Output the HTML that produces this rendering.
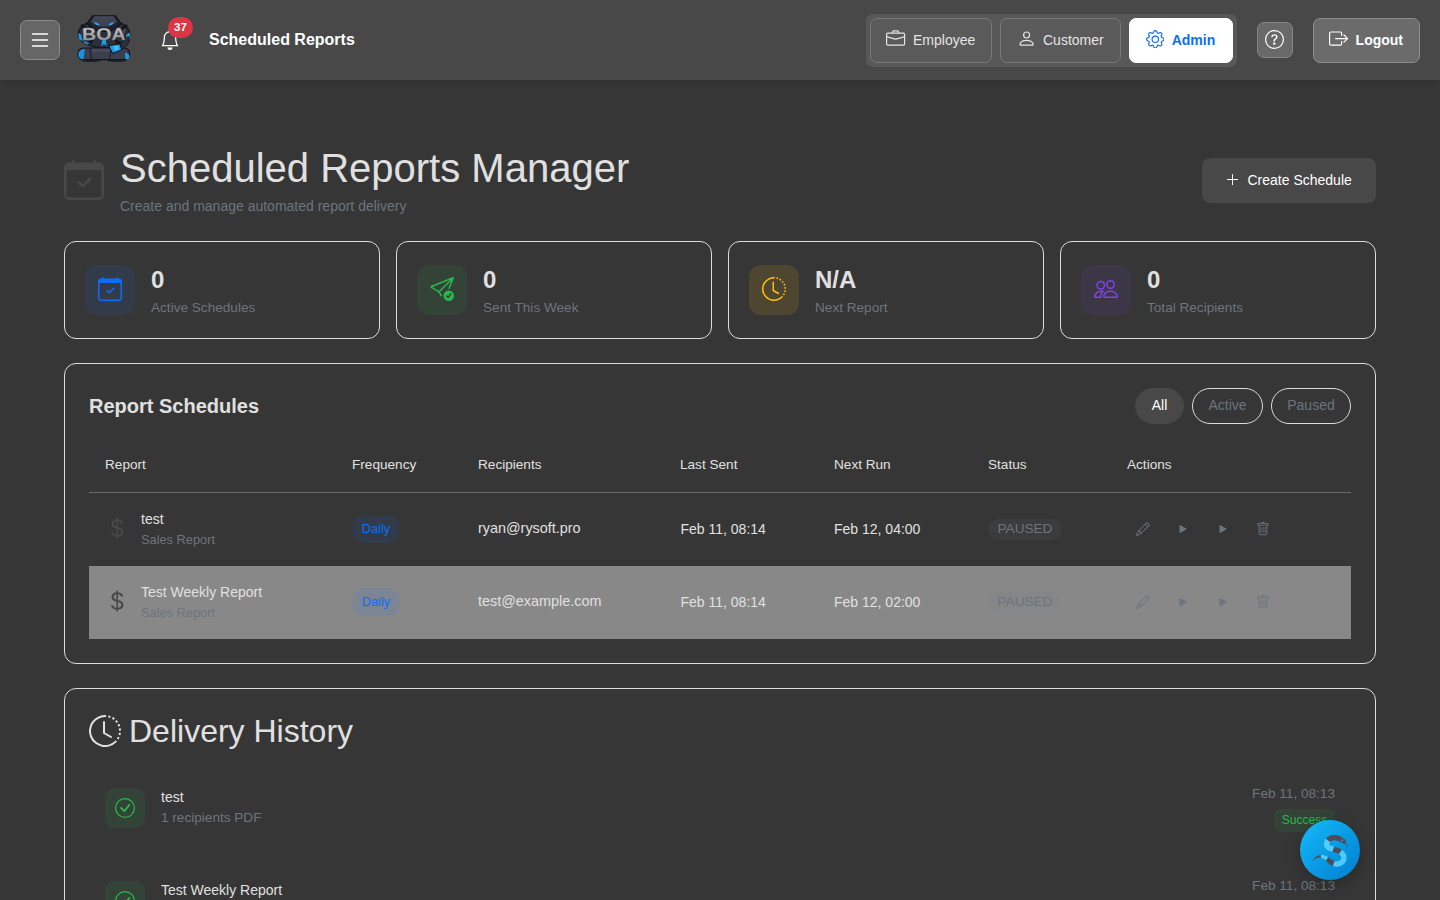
<!DOCTYPE html>
<html lang="en">
<head>
<meta charset="utf-8">
<title>Scheduled Reports</title>
<style>
*{box-sizing:border-box;margin:0;padding:0}
html,body{width:1440px;height:900px;overflow:hidden}
body{background:#363636;color:#e0e0e0;font-family:"Liberation Sans",Arial,sans-serif;font-size:16px;line-height:1.5;position:relative}
svg{display:block}
.ic{position:absolute}
.abs{position:absolute;white-space:nowrap}
.hdr{position:absolute;left:0;top:0;width:1440px;height:80px;background:#484848;box-shadow:0 2px 4px rgba(0,0,0,.12)}
.hbtn{position:absolute;left:20px;top:20px;width:40px;height:40px;background:#666;border:1px solid #8c8c8c;border-radius:7px}
.badge37{position:absolute;left:168px;top:17px;width:25px;height:21px;border-radius:10.5px;background:#dc3545;color:#fff;font-size:11.5px;font-weight:700;text-align:center;line-height:21px}
.ttl{position:absolute;left:209px;top:28px;font-size:16px;font-weight:700;color:#fff;line-height:24px;white-space:nowrap}
.seg{position:absolute;left:866px;top:14px;width:371px;height:52.700px;background:#585858;border-radius:7px}
.nb{position:absolute;top:18px;height:45px;border:1px solid #777;background:#5a5a5a;border-radius:7px;color:#e4e4e4;font-size:14px;line-height:43px;white-space:nowrap}
.nb span{position:absolute;top:0}
.h1{position:absolute;left:120px;top:144px;font-size:40px;line-height:48px;font-weight:400;color:#e0e0e0;white-space:nowrap}
.sub{position:absolute;left:120px;top:196px;font-size:14px;line-height:21px;color:#6c757d;white-space:nowrap}
.create{position:absolute;left:1202px;top:158px;width:174px;height:45px;background:#484848;border-radius:8px;color:#fff;font-size:14px;line-height:45px}
.stat{position:absolute;top:241px;width:316px;height:98px;border:1px solid #dcdcdc;border-radius:12px}
.stat .ib{position:absolute;left:20px;top:23px;width:50px;height:50px;border-radius:12px}
.stat .v{position:absolute;left:86px;top:20px;font-size:24px;font-weight:700;line-height:36px;color:#e0e0e0}
.stat .l{position:absolute;left:86px;top:54.500px;font-size:13.6px;line-height:21px;color:#6c757d;white-space:nowrap}
.card{position:absolute;left:64px;width:1312px;border:1px solid #dcdcdc;border-radius:12px}
.th{position:absolute;top:455px;font-size:13.6px;line-height:20px;color:#e0e0e0;white-space:nowrap}
.pill{position:absolute;top:388px;height:36px;border-radius:18px;font-size:14px;line-height:33px;text-align:center;border:1px solid #dcdcdc;color:#6c757d}
.row{position:absolute;left:89px;width:1262px;height:73px}
.row .c{position:absolute;white-space:nowrap}
.nm{font-size:14px;line-height:20px;color:#e0e0e0}
.ty{font-size:12.8px;line-height:20px;color:#6c757d}
.daily{left:263px;top:22px;width:48px;height:28px;border-radius:12px;background:rgba(13,110,253,.1);color:#0d6efd;font-size:12.8px;line-height:28px;text-align:center}
.em{left:389px;top:25px;font-size:14.4px;line-height:20px;color:#e0e0e0}
.dt{top:26px;font-size:14px;line-height:20px;color:#e0e0e0}
.paused{left:899px;top:26px;width:74px;height:21px;border-radius:10.5px;background:rgba(108,117,125,.1);color:#6c757d;font-size:13.6px;line-height:19.500px;text-align:center}
.hb{position:absolute;left:105px;width:40px;height:40px;border-radius:9px;background:rgba(40,167,69,.12)}
.hd{position:absolute;right:105px;font-size:13.6px;line-height:20px;color:#6c757d;white-space:nowrap}
.succ{position:absolute;left:1274px;width:61px;height:23px;border-radius:6px;background:rgba(40,167,69,.12);color:#28b84c;font-size:12px;line-height:23px;text-align:center}
.fab{position:absolute;left:1300px;top:820px;width:60px;height:60px;border-radius:50%;background:linear-gradient(135deg,#12b4f6 10%,#0284d2 90%);box-shadow:0 4px 14px rgba(0,0,0,.25)}
</style>
</head>
<body>
<div class="hdr">
  <div class="hbtn"><svg class="ic" style="left:7px;top:6.500px;" width="24" height="24" viewBox="0 0 16 16" fill="#fff"><path fill-rule="evenodd" d="M2.5 12a.5.5 0 0 1 .5-.5h10a.5.5 0 0 1 0 1H3a.5.5 0 0 1-.5-.5m0-4a.5.5 0 0 1 .5-.5h10a.5.5 0 0 1 0 1H3a.5.5 0 0 1-.5-.5m0-4a.5.5 0 0 1 .5-.5h10a.5.5 0 0 1 0 1H3a.5.5 0 0 1-.5-.5"/></svg></div>
  <svg class="ic" style="left:76px;top:14px" width="56" height="50" viewBox="0 0 56 50">
<defs><linearGradient id="sv" x1="0" y1="0" x2="0" y2="1"><stop offset="0" stop-color="#d2d2d2"/><stop offset=".55" stop-color="#b0b0b0"/><stop offset="1" stop-color="#8c8c8c"/></linearGradient></defs>
<ellipse cx="15" cy="46.300" rx="10" ry="1.800" fill="#20222b"/><ellipse cx="41" cy="46.300" rx="10" ry="1.800" fill="#20222b"/>
<ellipse cx="28" cy="19.800" rx="26.500" ry="14.800" fill="#181a22"/>
<ellipse cx="28" cy="19.800" rx="24.800" ry="13.300" fill="#2b2e3b"/>
<path d="M5 11 L12 16 M51 11 L44 16 M3 24 L10 24 M53 24 L46 24 M12 30 L17 26 M44 30 L39 26" stroke="#13141b" stroke-width="2.400"/>
<path d="M7 15 L10 21 M49 15 L46 21" stroke="#454959" stroke-width="2.500"/>
<path d="M16.500 1.800 H39.500 L45 9.500 L40 14 L33.500 17.500 H22.500 L16 14 L11 9.500 Z" fill="#1f212b" stroke="#13141b" stroke-width="1.200" stroke-linejoin="round"/>
<path d="M18 2.800 H38 L41.500 8 L33 12.500 H23 L14.500 8 Z" fill="#3f4354"/>
<path d="M18.500 2.900 H37.500" stroke="#5b6072" stroke-width=".8"/>
<path d="M17.500 8 L21.500 9 L24 11.600 L20 10.800 Z" fill="#1fb1f6"/><path d="M38.500 8 L34.500 9 L32 11.600 L36 10.800 Z" fill="#1fb1f6"/>
<path d="M26.300 25 L25.200 32.500 L27.300 30 L28 31.500 L28.700 30 L30.800 32.500 L29.700 25 Z" fill="#1a9aec"/>
<path d="M2.200 19 L3 25 L7 27.500 L5 20.500 Z" fill="#1a9aec"/><path d="M50.500 21 L53.800 18.500 L53.300 24.500 L49.500 27 Z" fill="#27b3f5"/>
<path d="M8 27 L14 29.500 L11 30.500 L7.500 28.500 Z" fill="#1a8fe0"/>
<rect x="1.200" y="33.500" width="53.200" height="12.800" rx="6.400" fill="#13141b"/>
<rect x="2.500" y="34.500" width="50.600" height="10.500" rx="5.200" fill="#3a3e4d"/>
<rect x="16" y="34.800" width="18" height="3" fill="#474b5b"/>
<path d="M14 34.500 L15.500 45 M35 34.500 L33.500 45" stroke="#1b1d26" stroke-width="1"/>
<path d="M2.300 40.500 Q2.300 35.500 8.800 35 L7.500 45.300 Q2.300 45 2.300 40.500 Z" fill="#1a8fe6"/>
<path d="M49 38.500 L52.500 40 Q54.500 43.500 51.500 45.500 L49.500 45 Z" fill="#1a9aec"/>
<path d="M44 28.500 Q50 27 52 22 L53.500 27 Q51.500 32.500 46 35 Z" fill="#2b2e3b" stroke="#13141b" stroke-width=".8"/>
<path d="M32.200 31.200 L44.200 29.400 L46.300 36 L36.200 40 Z" fill="#13141b"/>
<path d="M33.300 31.900 L43.500 30.400 L45.200 35.500 L36.800 38.800 Z" fill="#1a9aec"/><path d="M37 32.200 L41.800 31.500 L43.300 35.300 L39 37 Z" fill="#3abdf8"/>
<text x="27.800" y="25.800" text-anchor="middle" font-family="'Liberation Sans',Arial,sans-serif" font-weight="700" font-size="16.200" textLength="43.500" lengthAdjust="spacingAndGlyphs" fill="url(#sv)" stroke="#777" stroke-width=".3">BOA</text>
</svg>

  <svg class="ic" style="left:160px;top:30px;" width="20" height="20" viewBox="0 0 16 16" fill="#fff"><path d="M8 16a2 2 0 0 0 2-2H6a2 2 0 0 0 2 2M8 1.918l-.797.161A4 4 0 0 0 4 6c0 .628-.134 2.197-.459 3.742-.16.767-.376 1.566-.663 2.258h10.244c-.287-.692-.502-1.49-.663-2.258C12.134 8.197 12 6.628 12 6a4 4 0 0 0-3.203-3.92zM14.22 12c.223.447.481.801.78 1H1c.299-.199.557-.553.78-1C2.68 10.2 3 6.88 3 6c0-2.42 1.72-4.44 4.005-4.901a1 1 0 1 1 1.99 0A5 5 0 0 1 13 6c0 .88.32 4.2 1.22 6"/></svg>
  <div class="badge37">37</div>
  <div class="ttl">Scheduled Reports</div>
  <div class="seg"></div>
  <div class="nb" style="left:870px;width:122px"><svg class="ic" style="left:15.400px;top:10.400px;" width="19.200" height="19.200" viewBox="0 0 16 16" fill="#e4e4e4"><path d="M6.5 1A1.5 1.5 0 0 0 5 2.5V3H1.5A1.5 1.5 0 0 0 0 4.5v8A1.5 1.5 0 0 0 1.5 14h13a1.5 1.5 0 0 0 1.5-1.5v-8A1.5 1.5 0 0 0 14.5 3H11v-.5A1.5 1.5 0 0 0 9.5 1zm0 1h3a.5.5 0 0 1 .5.5V3H6v-.5a.5.5 0 0 1 .5-.5m1.886 6.914L15 7.151V12.5a.5.5 0 0 1-.5.5h-13a.5.5 0 0 1-.5-.5V7.15l6.614 1.764a1.5 1.5 0 0 0 .772 0M1.5 4h13a.5.5 0 0 1 .5.5v1.616L8.129 7.948a.5.5 0 0 1-.258 0L1 6.116V4.5a.5.5 0 0 1 .5-.5"/></svg><span style="left:42px">Employee</span></div>
  <div class="nb" style="left:1000px;width:121px"><svg class="ic" style="left:15.700px;top:10.400px;" width="19.200" height="19.200" viewBox="0 0 16 16" fill="#e4e4e4"><path d="M8 8a3 3 0 1 0 0-6 3 3 0 0 0 0 6m2-3a2 2 0 1 1-4 0 2 2 0 0 1 4 0m4 8c0 1-1 1-1 1H3s-1 0-1-1 1-4 6-4 6 3 6 4m-1-.004c-.001-.246-.154-.986-.832-1.664C11.516 10.68 10.289 10 8 10s-3.516.68-4.168 1.332c-.678.678-.83 1.418-.832 1.664z"/></svg><span style="left:42px">Customer</span></div>
  <div class="nb" style="left:1129px;width:104px;background:#fff;border-color:#fff;color:#0d6efd;font-weight:700"><svg class="ic" style="left:15.600px;top:10.650px;" width="18.600" height="18.600" viewBox="0 0 16 16" fill="#0d6efd"><path d="M8 4.754a3.246 3.246 0 1 0 0 6.492 3.246 3.246 0 0 0 0-6.492M5.754 8a2.246 2.246 0 1 1 4.492 0 2.246 2.246 0 0 1-4.492 0"/><path d="M9.796 1.343c-.527-1.79-3.065-1.79-3.592 0l-.094.319a.873.873 0 0 1-1.255.52l-.292-.16c-1.64-.892-3.433.902-2.54 2.541l.159.292a.873.873 0 0 1-.52 1.255l-.319.094c-1.79.527-1.79 3.065 0 3.592l.319.094a.873.873 0 0 1 .52 1.255l-.16.292c-.892 1.64.901 3.434 2.541 2.54l.292-.159a.873.873 0 0 1 1.255.52l.094.319c.527 1.79 3.065 1.79 3.592 0l.094-.319a.873.873 0 0 1 1.255-.52l.292.16c1.64.893 3.434-.902 2.54-2.541l-.159-.292a.873.873 0 0 1 .52-1.255l.319-.094c1.79-.527 1.79-3.065 0-3.592l-.319-.094a.873.873 0 0 1-.52-1.255l.16-.292c.893-1.64-.902-3.433-2.541-2.54l-.292.159a.873.873 0 0 1-1.255-.52zm-2.633.283c.246-.835 1.428-.835 1.674 0l.094.319a1.873 1.873 0 0 0 2.693 1.115l.291-.16c.764-.415 1.6.42 1.184 1.185l-.159.292a1.873 1.873 0 0 0 1.116 2.692l.318.094c.835.246.835 1.428 0 1.674l-.319.094a1.873 1.873 0 0 0-1.115 2.693l.16.291c.415.764-.42 1.6-1.185 1.184l-.291-.159a1.873 1.873 0 0 0-2.693 1.116l-.094.318c-.246.835-1.428.835-1.674 0l-.094-.319a1.873 1.873 0 0 0-2.692-1.115l-.292.16c-.764.415-1.6-.42-1.184-1.185l.159-.291A1.873 1.873 0 0 0 1.945 8.93l-.319-.094c-.835-.246-.835-1.428 0-1.674l.319-.094A1.873 1.873 0 0 0 3.06 4.377l-.16-.292c-.415-.764.42-1.6 1.185-1.184l.292.159a1.873 1.873 0 0 0 2.692-1.115z"/></svg><span style="left:41.700px">Admin</span></div>
  <div class="nb" style="left:1257px;top:22px;width:36px;height:36px;background:#696969;border-color:#868686"><svg class="ic" style="left:7px;top:6.700px;" width="19" height="19" viewBox="0 0 16 16" fill="#fff"><path d="M8 15A7 7 0 1 1 8 1a7 7 0 0 1 0 14m0 1A8 8 0 1 0 8 0a8 8 0 0 0 0 16"/><path d="M5.255 5.786a.237.237 0 0 0 .241.247h.825c.138 0 .248-.113.266-.25.09-.656.54-1.134 1.342-1.134.686 0 1.314.343 1.314 1.168 0 .635-.374.927-.965 1.371-.673.489-1.206 1.06-1.168 1.987l.003.217a.25.25 0 0 0 .25.246h.811a.25.25 0 0 0 .25-.25v-.105c0-.718.273-.927 1.01-1.486.609-.463 1.244-.977 1.244-2.056 0-1.511-1.276-2.241-2.673-2.241-1.267 0-2.655.59-2.75 2.286m1.557 5.763c0 .533.425.927 1.01.927.609 0 1.028-.394 1.028-.927 0-.552-.42-.94-1.029-.94-.584 0-1.009.388-1.009.94"/></svg></div>
  <div class="nb" style="left:1313px;width:107px;color:#fff;font-weight:700;background:#6b6b6b;border-color:#8c8c8c"><svg class="ic" style="left:14.700px;top:10.300px;" width="19.200" height="19.200" viewBox="0 0 16 16" fill="#fff"><path fill-rule="evenodd" d="M10 12.5a.5.5 0 0 1-.5.5h-8a.5.5 0 0 1-.5-.5v-9a.5.5 0 0 1 .5-.5h8a.5.5 0 0 1 .5.5v2a.5.5 0 0 0 1 0v-2A1.5 1.5 0 0 0 9.500 2h-8A1.500 1.500 0 0 0 0 3.500v9A1.500 1.500 0 0 0 1.500 14h8a1.500 1.500 0 0 0 1.500-1.500v-2a.5.5 0 0 0-1 0z"/><path fill-rule="evenodd" d="M15.854 8.354a.5.5 0 0 0 0-.708l-3-3a.5.5 0 0 0-.708.708L14.293 7.500H5.500a.5.5 0 0 0 0 1h8.793l-2.147 2.146a.5.5 0 0 0 .708.708z"/></svg><span style="left:41.600px">Logout</span></div>
</div>

<svg class="ic" style="left:64px;top:160px;" width="40" height="40" viewBox="0 0 16 16" fill="#484848"><path d="M10.854 7.146a.5.5 0 0 1 0 .708l-3 3a.5.5 0 0 1-.708 0l-1.500-1.500a.5.5 0 1 1 .708-.708L7.500 9.793l2.646-2.647a.5.5 0 0 1 .708 0"/><path d="M3.500 0a.5.5 0 0 1 .5.5V1h8V.5a.5.5 0 0 1 1 0V1h1a2 2 0 0 1 2 2v11a2 2 0 0 1-2 2H2a2 2 0 0 1-2-2V3a2 2 0 0 1 2-2h1V.5a.5.5 0 0 1 .5-.5M1 4v10a1 1 0 0 0 1 1h12a1 1 0 0 0 1-1V4z"/></svg>
<div class="h1">Scheduled Reports Manager</div>
<div class="sub">Create and manage automated report delivery</div>
<div class="create"><svg class="ic" style="left:23.300px;top:14.400px;" width="15" height="15" viewBox="0 0 16 16" fill="#fff"><path fill-rule="evenodd" d="M8 2a.5.5 0 0 1 .5.5v5h5a.5.5 0 0 1 0 1h-5v5a.5.5 0 0 1-1 0v-5h-5a.5.5 0 0 1 0-1h5v-5A.5.5 0 0 1 8 2"/></svg><span class="abs" style="left:45.500px;top:0">Create Schedule</span></div>

<div class="stat" style="left:64px"><div class="ib" style="background:rgba(13,110,253,.1)"><svg class="ic" style="left:13px;top:12px;" width="24" height="24" viewBox="0 0 16 16" fill="#0d6efd"><path d="M10.854 7.146a.5.5 0 0 1 0 .708l-3 3a.5.5 0 0 1-.708 0l-1.500-1.500a.5.5 0 1 1 .708-.708L7.500 9.793l2.646-2.647a.5.5 0 0 1 .708 0"/><path d="M3.500 0a.5.5 0 0 1 .5.5V1h8V.5a.5.5 0 0 1 1 0V1h1a2 2 0 0 1 2 2v11a2 2 0 0 1-2 2H2a2 2 0 0 1-2-2V3a2 2 0 0 1 2-2h1V.5a.5.5 0 0 1 .5-.5M1 4v10a1 1 0 0 0 1 1h12a1 1 0 0 0 1-1V4z"/></svg></div><div class="v">0</div><div class="l">Active Schedules</div></div>
<div class="stat" style="left:396px"><div class="ib" style="background:rgba(40,167,69,.12)"><svg class="ic" style="left:13px;top:12px;" width="24" height="24" viewBox="0 0 16 16" fill="#28b84c"><path d="M15.964.686a.5.5 0 0 0-.65-.65L.767 5.855a.75.75 0 0 0-.124 1.329l4.995 3.178 1.531 2.406a.5.5 0 0 0 .844-.536L6.637 10.07l7.494-7.494-1.895 4.738a.5.5 0 1 0 .928.372zm-2.54 1.183L5.930 9.363 1.591 6.602z"/><path d="M16 12.500a3.500 3.500 0 1 1-7 0 3.500 3.500 0 0 1 7 0m-1.993-1.679a.5.5 0 0 0-.686.172l-1.170 1.950-.547-.547a.5.5 0 0 0-.708.708l.774.773a.75.75 0 0 0 1.174-.144l1.335-2.226a.5.5 0 0 0-.172-.686"/></svg></div><div class="v">0</div><div class="l">Sent This Week</div></div>
<div class="stat" style="left:728px"><div class="ib" style="background:rgba(255,193,7,.12)"><svg class="ic" style="left:13px;top:12px;" width="24" height="24" viewBox="0 0 16 16" fill="#ffc107"><path d="M8.515 1.019A7 7 0 0 0 8 1V0a8 8 0 0 1 .589.022zm2.004.45a7 7 0 0 0-.985-.299l.219-.976q.576.129 1.126.342zm1.370.71a7 7 0 0 0-.439-.27l.493-.87a8 8 0 0 1 .979.654l-.615.789a7 7 0 0 0-.418-.302zm1.834 1.790a7 7 0 0 0-.653-.796l.724-.69q.406.429.747.91zm.744 1.352a7 7 0 0 0-.214-.468l.893-.45a8 8 0 0 1 .45 1.088l-.95.313a7 7 0 0 0-.179-.483m.53 2.507a7 7 0 0 0-.1-1.025l.985-.17q.1.58.116 1.17zm-.131 1.538q.05-.254.081-.51l.993.123a8 8 0 0 1-.23 1.155l-.964-.267q.069-.247.12-.501m-.952 2.379q.276-.436.486-.908l.914.405q-.24.54-.555 1.038zm-.964 1.205q.183-.183.35-.378l.758.653a8 8 0 0 1-.401.432z"/><path d="M8 1a7 7 0 1 0 4.950 11.950l.707.707A8.001 8.001 0 1 1 8 0z"/><path d="M7.500 3a.5.5 0 0 1 .5.5v5.210l3.248 1.856a.5.5 0 0 1-.496.868l-3.500-2A.5.5 0 0 1 7 9V3.500a.5.5 0 0 1 .5-.5"/></svg></div><div class="v">N/A</div><div class="l">Next Report</div></div>
<div class="stat" style="left:1060px"><div class="ib" style="background:rgba(111,66,193,.12)"><svg class="ic" style="left:13px;top:12px;" width="24" height="24" viewBox="0 0 16 16" fill="#7f42ec"><path d="M15 14s1 0 1-1-1-4-5-4-5 3-5 4 1 1 1 1zm-7.978-1L7 12.996c.001-.264.167-1.03.76-1.72C8.312 10.629 9.282 10 11 10c1.717 0 2.687.63 3.24 1.276.593.69.758 1.457.76 1.720l-.8.002-.14.002zM11 7a2 2 0 1 0 0-4 2 2 0 0 0 0 4m3-2a3 3 0 1 1-6 0 3 3 0 0 1 6 0M6.936 9.28a6 6 0 0 0-1.23-.247A7 7 0 0 0 5 9c-4 0-5 3-5 4q0 1 1 1h4.216A2.240 2.240 0 0 1 5 13c0-1.010.377-2.042 1.090-2.904.243-.294.526-.569.846-.816M4.920 10A5.500 5.500 0 0 0 4 13H1c0-.26.164-1.030.76-1.724.545-.636 1.492-1.256 3.160-1.275ZM1.500 5.500a3 3 0 1 1 6 0 3 3 0 0 1-6 0m3-2a2 2 0 1 0 0 4 2 2 0 0 0 0-4"/></svg></div><div class="v">0</div><div class="l">Total Recipients</div></div>

<div class="card" style="top:363px;height:301px"></div>
<div class="abs" style="left:89px;top:391px;font-size:20px;font-weight:700;line-height:30px;color:#e0e0e0">Report Schedules</div>
<div class="pill" style="left:1135px;width:49px;background:#484848;border-color:#484848;color:#fff">All</div>
<div class="pill" style="left:1192px;width:71px">Active</div>
<div class="pill" style="left:1271px;width:80px">Paused</div>

<div class="th" style="left:105px">Report</div>
<div class="th" style="left:352px">Frequency</div>
<div class="th" style="left:478px">Recipients</div>
<div class="th" style="left:680px">Last Sent</div>
<div class="th" style="left:834px">Next Run</div>
<div class="th" style="left:988px">Status</div>
<div class="th" style="left:1127px">Actions</div>
<div class="abs" style="left:89px;top:492px;width:1262px;height:1px;background:#6a6a6a"></div>

<div class="row" style="top:493px">
  <svg class="ic" style="left:16px;top:23px;" width="24" height="24" viewBox="0 0 16 16" fill="#484848"><path d="M4 10.781c.148 1.667 1.513 2.850 3.591 3.003V15h1.043v-1.216c2.270-.179 3.678-1.438 3.678-3.300 0-1.590-.947-2.510-2.956-3.028l-.722-.187V3.467c1.122.110 1.879.714 2.070 1.616h1.470c-.166-1.600-1.540-2.766-3.540-2.893V1H7.591v1.233c-1.939.230-3.270 1.472-3.270 3.156 0 1.454.966 2.483 2.661 2.917l.610.162v4.031c-1.149-.170-1.940-.800-2.131-1.718zm3.391-3.836c-1.043-.263-1.600-.825-1.600-1.616 0-.944.704-1.641 1.800-1.828v3.495l-.2-.050zm1.591 1.872c1.287.323 1.852.859 1.852 1.769 0 1.097-.826 1.828-2.200 1.939V8.730z"/></svg>
  <div class="c nm" style="left:52px;top:16px">test</div>
  <div class="c ty" style="left:52px;top:37px">Sales Report</div>
  <div class="c daily">Daily</div>
  <div class="c em">ryan@rysoft.pro</div>
  <div class="c dt" style="left:591.500px">Feb 11, 08:14</div>
  <div class="c dt" style="left:745px">Feb 12, 04:00</div>
  <div class="c paused">PAUSED</div>
  <svg class="ic" style="left:1046.500px;top:29px;" width="14" height="14" viewBox="0 0 16 16" fill="#6c757d"><path d="M12.146.146a.5.5 0 0 1 .708 0l3 3a.5.5 0 0 1 0 .708l-10 10a.5.5 0 0 1-.168.110l-5 2a.5.5 0 0 1-.650-.650l2-5a.5.5 0 0 1 .110-.168zM11.207 2.500 13.500 4.793 14.793 3.500 12.500 1.207zm1.586 3L10.500 3.207 4 9.707V10h.5a.5.5 0 0 1 .5.5v.5h.5a.5.5 0 0 1 .5.5v.5h.293zm-9.761 5.175-.106.106-1.528 3.821 3.821-1.528.106-.106A.5.5 0 0 1 5 12.500V12h-.5a.5.5 0 0 1-.5-.5V11h-.5a.5.5 0 0 1-.468-.325"/></svg><svg class="ic" style="left:1086.500px;top:29px;" width="14" height="14" viewBox="0 0 16 16" fill="#6c757d"><path d="m11.596 8.697-6.363 3.692c-.54.313-1.233-.066-1.233-.697V4.308c0-.63.692-1.010 1.233-.696l6.363 3.692a.802.802 0 0 1 0 1.393"/></svg><svg class="ic" style="left:1126.500px;top:29px;" width="14" height="14" viewBox="0 0 16 16" fill="#6c757d"><path d="m11.596 8.697-6.363 3.692c-.54.313-1.233-.066-1.233-.697V4.308c0-.63.692-1.010 1.233-.696l6.363 3.692a.802.802 0 0 1 0 1.393"/></svg><svg class="ic" style="left:1166.500px;top:29px;" width="14" height="14" viewBox="0 0 16 16" fill="#6c757d"><path d="M5.500 5.500A.5.5 0 0 1 6 6v6a.5.5 0 0 1-1 0V6a.5.5 0 0 1 .5-.5m2.500 0a.5.5 0 0 1 .5.5v6a.5.5 0 0 1-1 0V6a.5.5 0 0 1 .5-.5m3 .5a.5.5 0 0 0-1 0v6a.5.5 0 0 0 1 0z"/><path d="M14.500 3a1 1 0 0 1-1 1H13v9a2 2 0 0 1-2 2H5a2 2 0 0 1-2-2V4h-.5a1 1 0 0 1-1-1V2a1 1 0 0 1 1-1H6a1 1 0 0 1 1-1h2a1 1 0 0 1 1 1h3.500a1 1 0 0 1 1 1zM4.118 4 4 4.059V13a1 1 0 0 0 1 1h6a1 1 0 0 0 1-1V4.059L11.882 4zM2.500 3h11V2h-11z"/></svg>
</div>
<div class="abs" style="left:89px;top:565.600px;width:1262px;height:73.100px;background:#888"></div>
<div class="row" style="top:566px">
  <svg class="ic" style="left:16px;top:23px;" width="24" height="24" viewBox="0 0 16 16" fill="#484848"><path d="M4 10.781c.148 1.667 1.513 2.850 3.591 3.003V15h1.043v-1.216c2.270-.179 3.678-1.438 3.678-3.300 0-1.590-.947-2.510-2.956-3.028l-.722-.187V3.467c1.122.110 1.879.714 2.070 1.616h1.470c-.166-1.600-1.540-2.766-3.540-2.893V1H7.591v1.233c-1.939.230-3.270 1.472-3.270 3.156 0 1.454.966 2.483 2.661 2.917l.610.162v4.031c-1.149-.170-1.940-.800-2.131-1.718zm3.391-3.836c-1.043-.263-1.600-.825-1.600-1.616 0-.944.704-1.641 1.800-1.828v3.495l-.2-.050zm1.591 1.872c1.287.323 1.852.859 1.852 1.769 0 1.097-.826 1.828-2.200 1.939V8.730z"/></svg>
  <div class="c nm" style="left:52px;top:16px">Test Weekly Report</div>
  <div class="c ty" style="left:52px;top:37px">Sales Report</div>
  <div class="c daily">Daily</div>
  <div class="c em">test@example.com</div>
  <div class="c dt" style="left:591.500px">Feb 11, 08:14</div>
  <div class="c dt" style="left:745px">Feb 12, 02:00</div>
  <div class="c paused">PAUSED</div>
  <svg class="ic" style="left:1046.500px;top:29px;" width="14" height="14" viewBox="0 0 16 16" fill="#6c757d"><path d="M12.146.146a.5.5 0 0 1 .708 0l3 3a.5.5 0 0 1 0 .708l-10 10a.5.5 0 0 1-.168.110l-5 2a.5.5 0 0 1-.650-.650l2-5a.5.5 0 0 1 .110-.168zM11.207 2.500 13.500 4.793 14.793 3.500 12.500 1.207zm1.586 3L10.500 3.207 4 9.707V10h.5a.5.5 0 0 1 .5.5v.5h.5a.5.5 0 0 1 .5.5v.5h.293zm-9.761 5.175-.106.106-1.528 3.821 3.821-1.528.106-.106A.5.5 0 0 1 5 12.500V12h-.5a.5.5 0 0 1-.5-.5V11h-.5a.5.5 0 0 1-.468-.325"/></svg><svg class="ic" style="left:1086.500px;top:29px;" width="14" height="14" viewBox="0 0 16 16" fill="#6c757d"><path d="m11.596 8.697-6.363 3.692c-.54.313-1.233-.066-1.233-.697V4.308c0-.63.692-1.010 1.233-.696l6.363 3.692a.802.802 0 0 1 0 1.393"/></svg><svg class="ic" style="left:1126.500px;top:29px;" width="14" height="14" viewBox="0 0 16 16" fill="#6c757d"><path d="m11.596 8.697-6.363 3.692c-.54.313-1.233-.066-1.233-.697V4.308c0-.63.692-1.010 1.233-.696l6.363 3.692a.802.802 0 0 1 0 1.393"/></svg><svg class="ic" style="left:1166.500px;top:29px;" width="14" height="14" viewBox="0 0 16 16" fill="#6c757d"><path d="M5.500 5.500A.5.5 0 0 1 6 6v6a.5.5 0 0 1-1 0V6a.5.5 0 0 1 .5-.5m2.500 0a.5.5 0 0 1 .5.5v6a.5.5 0 0 1-1 0V6a.5.5 0 0 1 .5-.5m3 .5a.5.5 0 0 0-1 0v6a.5.5 0 0 0 1 0z"/><path d="M14.500 3a1 1 0 0 1-1 1H13v9a2 2 0 0 1-2 2H5a2 2 0 0 1-2-2V4h-.5a1 1 0 0 1-1-1V2a1 1 0 0 1 1-1H6a1 1 0 0 1 1-1h2a1 1 0 0 1 1 1h3.500a1 1 0 0 1 1 1zM4.118 4 4 4.059V13a1 1 0 0 0 1 1h6a1 1 0 0 0 1-1V4.059L11.882 4zM2.500 3h11V2h-11z"/></svg>
</div>

<div class="card" style="top:688px;height:400px"></div>
<svg class="ic" style="left:89px;top:715px;" width="32" height="32" viewBox="0 0 16 16" fill="#e0e0e0"><path d="M8.515 1.019A7 7 0 0 0 8 1V0a8 8 0 0 1 .589.022zm2.004.45a7 7 0 0 0-.985-.299l.219-.976q.576.129 1.126.342zm1.370.71a7 7 0 0 0-.439-.27l.493-.87a8 8 0 0 1 .979.654l-.615.789a7 7 0 0 0-.418-.302zm1.834 1.790a7 7 0 0 0-.653-.796l.724-.69q.406.429.747.91zm.744 1.352a7 7 0 0 0-.214-.468l.893-.45a8 8 0 0 1 .45 1.088l-.95.313a7 7 0 0 0-.179-.483m.53 2.507a7 7 0 0 0-.1-1.025l.985-.17q.1.58.116 1.17zm-.131 1.538q.05-.254.081-.51l.993.123a8 8 0 0 1-.23 1.155l-.964-.267q.069-.247.12-.501m-.952 2.379q.276-.436.486-.908l.914.405q-.24.54-.555 1.038zm-.964 1.205q.183-.183.35-.378l.758.653a8 8 0 0 1-.401.432z"/><path d="M8 1a7 7 0 1 0 4.950 11.950l.707.707A8.001 8.001 0 1 1 8 0z"/><path d="M7.500 3a.5.5 0 0 1 .5.5v5.210l3.248 1.856a.5.5 0 0 1-.496.868l-3.500-2A.5.5 0 0 1 7 9V3.500a.5.5 0 0 1 .5-.5"/></svg>
<div class="abs" style="left:129px;top:707px;font-size:32px;line-height:48px;font-weight:400;color:#e0e0e0">Delivery History</div>

<div class="hb" style="top:788px"><svg class="ic" style="left:10px;top:10px;" width="20" height="20" viewBox="0 0 16 16" fill="#28b84c"><path d="M8 15A7 7 0 1 1 8 1a7 7 0 0 1 0 14m0 1A8 8 0 1 0 8 0a8 8 0 0 0 0 16"/><path d="m10.970 4.970a.235.235 0 0 0-.02.022L7.477 9.417 5.384 7.323a.75.75 0 0 0-1.060 1.060L6.970 11.030a.75.75 0 0 0 1.079-.020l3.992-4.990a.75.75 0 0 0-1.071-1.050"/></svg></div>
<div class="abs nm" style="left:161px;top:787px">test</div>
<div class="abs" style="left:161px;top:808px;font-size:13.6px;line-height:20px;color:#6c757d">1 recipients PDF</div>
<div class="hd" style="top:784px">Feb 11, 08:13</div>
<div class="succ" style="top:808.500px">Success</div>

<div class="hb" style="top:881px"><svg class="ic" style="left:10px;top:10px;" width="20" height="20" viewBox="0 0 16 16" fill="#28b84c"><path d="M8 15A7 7 0 1 1 8 1a7 7 0 0 1 0 14m0 1A8 8 0 1 0 8 0a8 8 0 0 0 0 16"/><path d="m10.970 4.970a.235.235 0 0 0-.02.022L7.477 9.417 5.384 7.323a.75.75 0 0 0-1.060 1.060L6.970 11.030a.75.75 0 0 0 1.079-.020l3.992-4.990a.75.75 0 0 0-1.071-1.050"/></svg></div>
<div class="abs nm" style="left:161px;top:880px">Test Weekly Report</div>
<div class="hd" style="top:875.500px">Feb 11, 08:13</div>

<div class="fab"><svg class="ic" style="left:0;top:0" width="60" height="60" viewBox="0 0 60 60">
<polygon points="44,19 43.6,18.7 43.3,18.4 42.9,18 42.5,17.7 42,17.4 41.6,17 41.1,16.7 40.6,16.4 40,16 39.4,15.8 38.8,15.7 38.3,15.5 37.7,15.3 37.1,15.2 36.5,15.1 35.9,15 35.2,14.9 34.6,14.9 33.9,14.9 33.2,14.9 32.5,15 31.8,15.2 31.2,15.3 30.5,15.5 29.9,15.8 29.2,16.1 28.6,16.4 28,16.7 27.4,17.1 26.8,17.6 26.3,18.1 25.8,18.6 30,22.1 30.1,21.9 30.3,21.7 30.4,21.6 30.6,21.4 30.9,21.3 31.2,21.1 31.6,20.9 32,20.8 32.4,20.6 32.8,20.5 33.2,20.4 33.6,20.3 33.9,20.3 34.2,20.3 34.5,20.3 34.9,20.3 35.3,20.3 35.7,20.4 36.1,20.5 36.5,20.6 36.9,20.7 37.3,20.9 37.7,21.1 38.1,21.1 38.4,21.2 38.8,21.4 39.2,21.5 39.7,21.7 40.2,21.9 40.6,22.1 41.1,22.3 41.7,22.5 42,22.6" fill="#4b4e59"/>
<polygon points="25.7,18.8 25.3,19.3 25,19.9 24.7,20.5 24.4,21.1 24.2,21.7 24.1,22.4 23.9,23 23.9,23.7 23.9,24.3 24,25 24.1,25.6 24.3,26.2 24.6,26.8 24.9,27.4 25.2,27.9 25.6,28.4 26.1,28.9 26.6,29.4 27.2,29.8 27.8,30.2 28.4,30.5 29,30.7 29.6,30.9 30.2,31.1 30.7,31.3 31.2,31.4 31.7,31.6 32.3,31.8 34.4,26.8 33.9,26.7 33.3,26.5 32.8,26.3 32.2,26.1 31.7,25.9 31.2,25.8 30.8,25.6 30.5,25.5 30.2,25.3 30.1,25.2 30,25.2 29.8,25 29.7,24.9 29.6,24.8 29.5,24.6 29.4,24.4 29.4,24.3 29.3,24.1 29.3,24 29.3,23.8 29.3,23.7 29.3,23.6 29.3,23.4 29.4,23.2 29.5,22.9 29.6,22.7 29.8,22.4 29.9,22.2 30,22" fill="#52cdfc"/>
<polygon points="32.5,31.9 33.2,32.1 33.8,32.3 34.5,32.5 35.1,32.6 35.7,32.8 36.3,33 36.8,33.1 37.2,33.3 37.6,33.5 37.9,33.7 38.4,34 38.8,34.3 41.9,29.9 41.3,29.5 40.7,29.1 40.1,28.7 39.4,28.4 38.6,28.1 37.9,27.8 37.2,27.6 36.5,27.4 35.9,27.2 35.3,27.1 34.7,26.9 34.2,26.8 34.2,26.8" fill="#4b4e59"/>
<polygon points="38.8,34.3 39.2,34.6 39.6,34.9 39.9,35.2 40.2,35.5 40.4,35.7 40.6,36 40.8,36.2 40.9,36.4 41,36.6 41.1,36.9 41.1,37.2 41.2,37.5 41.2,37.8 41.2,38.1 41.2,38.4 41.1,38.6 41.1,38.8 41,38.9 41,39.1 40.8,39.3 40.7,39.5 40.4,39.7 40.2,40 39.9,40.2 39.6,40.4 39.3,40.6 39.1,40.7 38.9,40.9 38.6,40.9 38.3,41 38,41.1 37.6,41.2 37.3,41.2 36.9,41.2 36.5,41.3 36.1,41.3 35.8,41.2 35.5,41.2 35.2,41.1 34.9,41.1 34.6,40.8 32.5,46 33.1,46.1 33.6,46.3 34.3,46.5 34.9,46.6 35.5,46.6 36.1,46.7 36.7,46.7 37.4,46.6 38,46.6 38.6,46.5 39.3,46.4 39.9,46.2 40.6,46 41.2,45.7 41.8,45.4 42.3,45.1 42.9,44.7 43.4,44.3 43.9,43.9 44.4,43.4 44.9,42.9 45.3,42.3 45.7,41.7 46,41 46.3,40.3 46.5,39.6 46.6,38.9 46.6,38.2 46.6,37.5 46.5,36.7 46.4,36 46.2,35.3 46,34.6 45.7,34 45.3,33.3 44.9,32.7 44.4,32.1 43.9,31.6 43.4,31.1 42.9,30.6 42.3,30.1 41.9,29.9" fill="#4ecafc"/>
<polygon points="34.6,40.8 34.3,40.8 33.9,40.7 33.6,40.6 33.2,40.4 32.8,40.3 32.4,40.1 32.1,40 31.8,39.8 31.5,39.6 31.2,39.4 30.8,39.1 30.4,38.8 30,38.5 29.5,38.1 29,37.8 28.5,37.4 28.1,37.2 25.8,40.4 26.1,40.7 26.4,41 26.7,41.3 27,41.7 27.3,42 27.6,42.4 28,42.8 28.4,43.3 28.8,43.7 29.3,44.1 29.8,44.5 30.3,44.8 30.8,45.1 31.2,45.4 31.7,45.7 32.3,45.9 32.8,46.2 32.8,46.2" fill="#4b4e59"/>
<polygon points="28.1,37.2 27.6,36.9 27.2,36.7 26.7,36.4 26.2,36.2 25.7,35.9 25.2,35.7 24.7,35.5 24.2,35.3 23.6,35.2 23,35.1 22.5,35 22,35 21.4,35 20.9,35 20.9,37.6 21.3,37.7 21.7,37.8 22,37.9 22.4,38 22.7,38.1 23,38.3 23.3,38.5 23.6,38.7 24,38.9 24.3,39.2 24.7,39.5 25,39.8 25.4,40.1 25.8,40.4 25.8,40.4" fill="#52cdfc"/>
<polygon points="20.9,35 20.4,35.1 19.9,35.2 19.4,35.3 19,35.4 18.5,35.5 18.1,35.7 17.6,35.9 17.2,36.1 16.8,36.3 16.4,36.6 16.1,36.8 15.7,37.1 15.4,37.3 15.1,37.6 14.8,37.8 14.5,38.1 14.2,38.3 13.9,38.6 13.7,38.8 13.4,39.1 13.2,39.4 13,39.6 12.7,39.9 12.5,40.2 12.3,40.4 12.5,40.6 12.8,40.5 13.1,40.3 13.4,40.1 13.6,39.9 13.9,39.7 14.2,39.5 14.5,39.3 14.8,39.2 15.1,39 15.4,38.8 15.8,38.7 16.1,38.5 16.5,38.3 16.8,38.2 17.2,38 17.6,37.9 17.9,37.8 18.3,37.7 18.6,37.6 19,37.6 19.3,37.6 19.7,37.6 20.1,37.6 20.5,37.6 20.9,37.6 20.9,37.6" fill="#4b4e59"/>
<polygon points="44,19 45.4,19.6 46.3,23.6 43.7,23.8 42,22.6" fill="#4b4e59"/>
<path d="M40.8 19.5 l2.4 .7 l-1.6 .9 z" fill="#36c0fb"/>
<path d="M45.7 23.9 l1.500 2.600 l.3 -1.400" stroke="#4b4e59" stroke-width=".7" fill="none"/>
</svg>
</div>
</body>
</html>
